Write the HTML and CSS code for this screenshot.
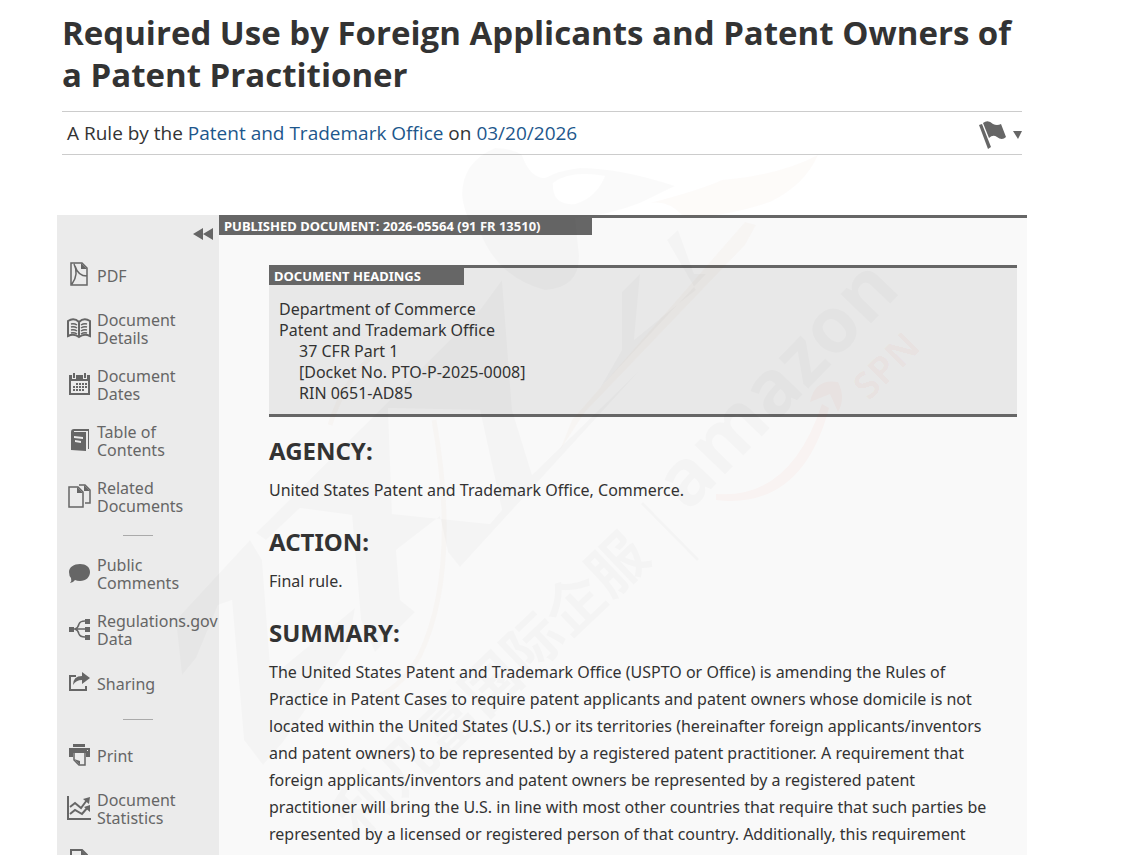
FILE: index.html
```
<!DOCTYPE html>
<html lang="en">
<head>
    <meta charset="UTF-8">
    <meta name="viewport" content="width=device-width, initial-scale=1.0">
    <title>Required Use by Foreign Applicants and Patent Owners of a Patent Practitioner</title>
    <link rel="stylesheet" href="styles.css">
</head>
<body>
    <div class="page">
        <header class="doc-header">
            <h1>Required Use by Foreign Applicants and Patent Owners of a Patent Practitioner</h1>
            <div class="metadata">
                <p>A Rule by the <a href="#agency">Patent and Trademark Office</a> on <a href="#date">03/20/2026</a></p>
                <button class="flag-btn" type="button" aria-label="Flag document">
                    <svg class="flag" width="27" height="28" viewBox="0 0 27 28"><path d="M0 4 3 3 12 26 9 28zM4 2Q9-2 14 3 18 5 22 3L27 16Q23 20 18 16 14 13 10 17z"/></svg>
                    <svg class="caret" width="9" height="8" viewBox="0 0 9 8"><path d="M0 0h9L5 8z"/></svg>
                </button>
            </div>
        </header>

        <div class="doc-body">
            <aside class="sidebar">
                <button class="collapse-btn" type="button" aria-label="Collapse sidebar">
                    <svg width="20" height="12" viewBox="0 0 20 12"><path d="M0 6 10 0v12zM10 6 20 0v12z"/></svg>
                </button>
                <nav>
                    <ul class="tools">
                        <li><a href="#pdf">
                            <svg viewBox="0 0 24 24"><path class="line mid" d="M4 1h11l5 5v17H4zM5 22C10 15 10 8 7 2M8 4Q11 14 20 14"/><path d="M14 1v6h6z"/></svg>
                            <span>PDF</span></a></li>
                        <li><a href="#details">
                            <svg viewBox="0 0 24 24"><path class="line thick" d="M12 6Q7 1 1 5v15q6-3 11 1 5-4 11-1V5q-6-4-11 1v15"/><path class="line mid" d="M4 8q3-1 6 1M4 11q3-1 6 1M4 14q3-1 6 1M4 17q3-1 6 1M20 8q-3-1-6 1M20 11q-3-1-6 1M20 14q-3-1-6 1M20 17q-3-1-6 1"/></svg>
                            <span>Document Details</span></a></li>
                        <li><a href="#dates">
                            <svg viewBox="0 0 24 24"><path fill-rule="evenodd" d="M2 3h3v4h4V3h7v4h4V3h3v20H2zM4 9v12h17V9z"/><path d="M6 1h2v5H6zM17 1h2v5h-2z"/><path class="dots" d="M9 12h11M6 15h14M6 18h11"/></svg>
                            <span>Document Dates</span></a></li>
                        <li><a href="#contents">
                            <svg viewBox="0 0 24 24"><path fill-rule="evenodd" d="M4 4Q4 1 7 1h15v20h-1V3H7v1h12v19L4 22zM7 8v2l9 1V9zM8 12v2l6 1v-2z"/></svg>
                            <span>Table of Contents</span></a></li>
                        <li><a href="#related">
                            <svg viewBox="0 0 24 24"><path class="line mid" d="M2 3h9l5 5v15H2zM12 1h6l5 5v13h-5"/><path d="M10 3v6h6zM17 1v6h6z"/></svg>
                            <span>Related Documents</span></a></li>
                    </ul>
                    <ul class="tools">
                        <li><a href="#comments">
                            <svg viewBox="0 0 24 24"><path d="M13 3c6 0 10 3 10 8s-4 9-10 9q-3 0-5-1-2 3-5 3 2-2 1-5-2-2-2-6c0-5 5-8 11-8z"/></svg>
                            <span>Public Comments</span></a></li>
                        <li><a href="#data">
                            <svg viewBox="0 0 24 24"><path d="M2 10h5v5H2zM18 2h5v5h-5zM18 10h5v5h-5zM18 18h5v5h-5z"/><path class="line mid" d="M6 12h12M8 12q3-1 4-5 1-3 6-3M8 12q3 1 4 5 1 3 6 3"/></svg>
                            <span>Regulations.gov Data</span></a></li>
                        <li><a href="#sharing">
                            <svg viewBox="0 0 24 24"><path class="line thick" d="M9 6H3v14h16v-4"/><path d="M15 2l8 6-8 6v-4Q9 10 6 15q0-9 9-9z"/></svg>
                            <span>Sharing</span></a></li>
                    </ul>
                    <ul class="tools">
                        <li><a href="#print">
                            <svg viewBox="0 0 24 24"><path fill-rule="evenodd" d="M6 2h12v3H6zM2 6h21v9h-4v-4H6v4H2zM20 8v1h1V8z"/><path class="line mid" d="M7 11v7l5 5h6V11"/><path d="M7 17l6 6v-4z"/></svg>
                            <span>Print</span></a></li>
                        <li><a href="#statistics">
                            <svg viewBox="0 0 24 24"><path class="line thick" d="M1 0v23h23"/><path class="line thick" d="M3 11l5-4 6 5 6-8M3 18l5-4 7 4 6-7"/><path d="M16 3l7-2-1 7zM17 11l6-2v7z"/></svg>
                            <span>Document Statistics</span></a></li>
                        <li><a href="#formats">
                            <svg viewBox="0 0 24 24"><path class="line thick" d="M4 1h11l5 5v17H4zM8 12h8"/><path d="M14 1v6h6z"/></svg>
                            <span>Other Formats</span></a></li>
                    </ul>
                </nav>
            </aside>

            <main class="content">
                <h2 class="label label-doc">Published Document: 2026-05564 (91 FR 13510)</h2>
                <section class="headings">
                    <h2 class="label label-headings">Document Headings</h2>
                    <p>Department of Commerce</p>
                    <p>Patent and Trademark Office</p>
                    <ul>
                        <li>37 CFR Part 1</li>
                        <li>[Docket No. PTO-P-2025-0008]</li>
                        <li>RIN 0651-AD85</li>
                    </ul>
                </section>
                <h3>AGENCY:</h3>
                <p>United States Patent and Trademark Office, Commerce.</p>
                <h3>ACTION:</h3>
                <p>Final rule.</p>
                <h3>SUMMARY:</h3>
                <p>The United States Patent and Trademark Office (USPTO or Office) is amending the Rules of Practice in Patent Cases to require patent applicants and patent owners whose domicile is not located within the United States (U.S.) or its territories (hereinafter foreign applicants/inventors and patent owners) to be represented by a registered patent practitioner. A requirement that foreign applicants/inventors and patent owners be represented by a registered patent practitioner will bring the U.S. in line with most other countries that require that such parties be represented by a licensed or registered person of that country. Additionally, this requirement</p>
            </main>
        </div>

        <svg class="watermark" width="1121" height="855" viewBox="0 0 1121 855" aria-hidden="true">
            <!-- bird and stylised letters -->
            <path class="ink" fill-rule="evenodd" d="M495 148Q462 162 462 195 465 222 480 232 498 278 545 290 580 288 579 255L575 218Q610 215 640 203L675 186Q620 168 580 168 560 170 545 178 530 178 522 155 512 148 495 148zM553 183Q570 170 605 176 596 198 575 204 552 206 553 183z"/>
            <path class="ink" d="M182 675 176 620 250 540 262 560 270 665 282 668 355 608 348 648 283 742 263 765 244 740 232 600 218 605 196 658z"/>
            <path class="ink" fill-rule="evenodd" d="M256 533 370 420 480 310 502 280 512 410 532 475 640 370 460 567 448 552 440 516 396 550 400 600 415 612 375 652 361 620 352 515 300 508 266 540zM388 408 392 514 490 524 502 510 480 410z"/>
            <path class="ink" d="M622 292 640 274 634 340 668 312 696 290 667 240 678 230 694 274 706 274 600 388 622 350z"/>
            <path class="gold" d="M650 203Q700 190 722 180 780 175 818 155 805 185 770 202 715 220 682 215 668 200 650 203z"/>
            <path class="gold" d="M745 222 756 225 745 245 585 412 560 450 572 420z"/>
            <path class="gold-line" d="M434 420Q460 570 420 655 400 690 370 700M330 425Q345 375 385 345"/>
            <!-- wordmark -->
            <g class="ink" transform="translate(398 852) rotate(-43.5)">
                <text class="wm-latin" x="-14" y="2">RY INTERNATIONAL ENTERPRISE SERVICES</text>
                <text class="wm-cjk" x="-20" y="-37">利几富国际企服</text>
            </g>
            <path class="ink-line" d="M642 503 698 560"/>
            <text class="ink wm-amazon" transform="translate(688 513) rotate(-46)">amazon</text>
            <text class="red wm-spn" transform="translate(869 402) rotate(-45)">SPN</text>
            <path class="red" d="M716 494Q790 500 822 404L829 408Q802 510 716 500zM810 402Q815 378 838 382 846 398 838 412L830 394z"/>
        </svg>
    </div>
</body>
</html>
```

FILE: styles.css
```
* {
    box-sizing: border-box;
    margin: 0;
    padding: 0;
}

body {
    font-family: "Segoe UI", "Noto Sans", "Open Sans", sans-serif;
    font-size: 16px;
    color: #333;
    background: #fff;
}

.page {
    position: relative;
    height: 100vh;
    overflow: hidden;
    padding: 12px 94px 0 57px;
}
.doc-header {
    padding: 0 5px;
    font-family: "Segoe UI", "Open Sans", sans-serif;
}
h1 { font-size: 33px; line-height: 42px; }
.metadata {
    display: flex;
    justify-content: space-between;
    align-items: center;
    height: 44px;
    margin-top: 15px;
    padding-left: 5px;
    font-size: 19px;
    border: solid #ccc;
    border-width: 1px 0;
}
a { color: #1d578c; text-decoration: none; }
button { border: 0; background: none; }
svg { fill: #666; }
.flag-btn { display: flex; align-items: center; gap: 7px; padding-top: 3px; }

.doc-body { display: flex; margin-top: 60px; }
.sidebar {
    flex: 0 0 162px;
    overflow: hidden;
    background: #ebebeb;
}
.collapse-btn {
    display: block;
    margin: 13px 6px 17px auto;
}
.tools { list-style: none; }
.tools a {
    display: flex;
    align-items: center;
    gap: 6px;
    min-height: 31px;
    margin-bottom: 20px;
    padding-left: 10px;
    line-height: 18px;
    color: #666;
}
.tools svg { flex: 0 0 24px; height: 24px; margin-bottom: 3px; }
.tools span { flex: 0 0 112px; }
.tools + .tools::before {
    content: "";
    display: block;
    width: 30px;
    margin: 0 0 20px 66px;
    border-top: 1px solid #aaa;
}
.line { fill: none; stroke: #666; stroke-width: 1; }
.mid { stroke-width: 1.5; }
.thick { stroke-width: 2; }
.dots { stroke: #666; stroke-width: 2; stroke-dasharray: 2 1; }

.content {
    flex: 1;
    min-width: 0;
    padding: 0 10px 0 50px;
    line-height: 27px;
    background: #f9f9f9;
    border-top: 3px solid #666;
}
.content > p { padding-right: 16px; }
.label {
    padding-left: 5px;
    font-size: 13px;
    line-height: 17px;
    text-transform: uppercase;
    color: #fff;
    background: #666;
}
.label-doc { width: 373px; margin: 0 0 30px -50px; }
.label-headings { width: 195px; margin: 0 0 14px -10px; }
.headings {
    padding: 0 10px 10px;
    line-height: 21px;
    background: #e8e8e8;
    border: solid #666;
    border-width: 3px 0;
}
.headings ul { padding-left: 20px; list-style: none; }
h3 { margin: 22px 0 10px; font-size: 24px; line-height: 32px; }
.headings + h3 { margin-top: 18px; }

.watermark {
    position: absolute;
    top: 0;
    left: 0;
    pointer-events: none;
}
.ink { fill: rgba(0, 0, 0, 0.02); }
.ink-line { fill: none; stroke: rgba(0, 0, 0, 0.02); stroke-width: 3; }
.gold { fill: rgba(160, 90, 20, 0.025); }
.gold-line { fill: none; stroke: rgba(160, 90, 20, 0.025); stroke-width: 5; }
.red { fill: rgba(240, 60, 20, 0.03); }
.wm-amazon { font: bold 78px "Open Sans", sans-serif; }
.wm-spn { font: bold 38px "Open Sans", sans-serif; }
.wm-latin { font: 20px "Open Sans", sans-serif; }
.wm-cjk { font: bold 58px "Noto Sans CJK SC", sans-serif; }
```
